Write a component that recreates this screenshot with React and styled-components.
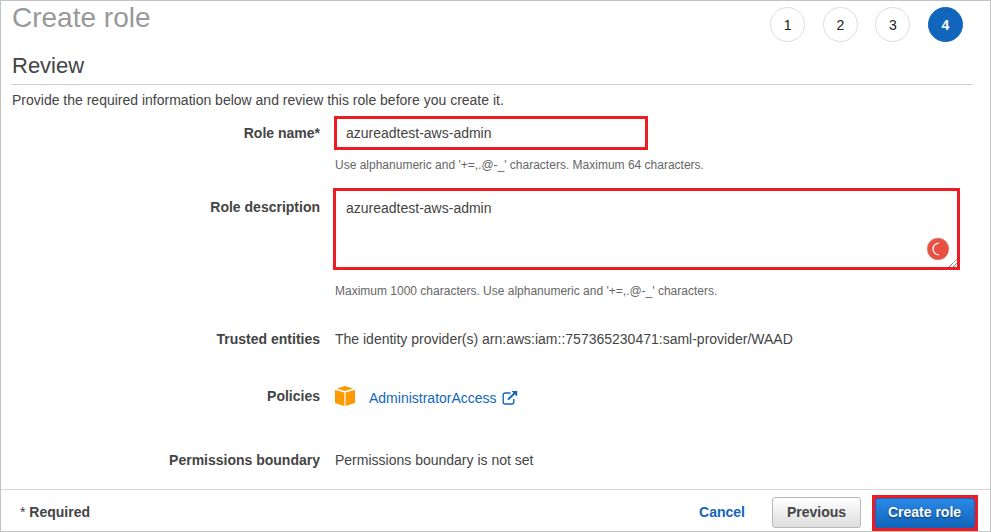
import React from "react";
import styled, { createGlobalStyle, css } from "styled-components";

const GlobalStyle = createGlobalStyle`
  * { box-sizing: border-box; }
  body {
    margin: 0;
    background: #fff;
    color: #444;
    font: 14px/18px "Liberation Sans", Arial, sans-serif;
  }
`;

const Page = styled.div`
  width: 991px;
  height: 532px;
  border: 1px solid #c3c3c3;
  display: flex;
  flex-direction: column;
  overflow: hidden;
`;

const Main = styled.main`
  flex: 1;
  min-height: 0;
  padding: 0 18px 0 11px;
`;

const Header = styled.header`
  display: flex;
  justify-content: space-between;
  height: 48px;
`;

const Title = styled.h1`
  margin: 0;
  font-size: 28px;
  line-height: 34px;
  font-weight: 400;
  color: #999;
`;

const Steps = styled.ol`
  display: flex;
  gap: 17.6px;
  list-style: none;
  margin: 6px 9px 0 0;
  padding: 0;
`;

const Step = styled.li`
  width: 35px;
  height: 35px;
  padding-top: 1px;
  border-radius: 50%;
  border: 1px solid #ddd;
  display: flex;
  align-items: center;
  justify-content: center;
  color: #222;
  ${(p) =>
    p.$active &&
    css`
      background: #1166bb;
      border-color: #1166bb;
      color: #fff;
      font-weight: 700;
    `}
`;

const SectionTitle = styled.h2`
  margin: 0;
  height: 36px;
  border-bottom: 1px solid #ccc;
  font-size: 22px;
  line-height: 34px;
  font-weight: 400;
`;

const Intro = styled.p`
  margin: 6px 0 7px;
`;

const Row = styled.div`
  display: grid;
  grid-template-columns: 308px 1fr;
  column-gap: 15px;
  height: ${(p) => p.$height}px;
`;

const Label = styled.div`
  padding-top: ${(p) => p.$top || 0}px;
  text-align: right;
  font-weight: 700;
`;

const Value = styled.div`
  min-width: 0;
`;

const Field = styled.div`
  display: flex;
  justify-content: space-between;
  width: ${(p) => p.$width}px;
  height: ${(p) => p.$height}px;
  margin-left: ${(p) => p.$shift}px;
  padding: ${(p) => p.$pad};
  border: 3px solid #ed1c24;
`;

const FieldIcons = styled.div`
  align-self: flex-end;
  display: flex;
  align-items: flex-end;
`;

const Spinner = styled.svg`
  width: 24px;
  height: 24px;
  margin-bottom: 6px;
`;

const Grip = styled.svg`
  width: 8px;
  height: 8px;
  margin-left: -1px;
`;

const Hint = styled.div`
  margin-top: ${(p) => p.$top}px;
  font-size: 12px;
  line-height: 16px;
  color: #666;
`;

const Policy = styled.div`
  display: flex;
  align-items: flex-start;
`;

const Cube = styled.svg`
  width: 20px;
  height: 20px;
  margin-top: -1px;
  margin-right: 14px;
`;

const PolicyLink = styled.a`
  display: flex;
  color: #1166bb;
  padding-top: 2px;
`;

const External = styled.svg`
  width: 16px;
  height: 14px;
  margin: 2px 0 0 5px;
`;

const Footer = styled.footer`
  display: flex;
  align-items: center;
  height: 42px;
  border-top: 1px solid #d5d5d5;
  padding: 5px 12px 0 19px;
  font-weight: 700;
`;

const Required = styled.div`
  flex: 1;
  margin-bottom: 2px;
`;

const Star = styled.span`
  font-weight: 400;
`;

const Cancel = styled.a`
  color: #1166bb;
  margin: 0 27px 2px 0;
`;

const Button = styled.button`
  font: inherit;
  border-radius: 3px;
  ${(p) =>
    p.$primary
      ? css`
          width: 100px;
          height: 30px;
          padding: 0 1px 2px 0;
          color: #fff;
          border: 1px solid #1166bb;
          background: linear-gradient(#2b88e6, #1166bb);
          text-shadow: 0 1px 2px #063a70;
        `
      : css`
          width: 89px;
          height: 31px;
          padding: 0 0 1px;
          color: #444;
          border: 1px solid #b8b8b8;
          background: linear-gradient(#fff, #ddd);
          margin: 0 11px 1px 0;
        `}
`;

const Highlight = styled.div`
  display: flex;
  border: 3px solid #ed1c24;
  background: #ed1c24;
`;

export default function App() {
  return (
    <>
      <GlobalStyle />
      <Page>
        <Main>
          <Header>
            <Title>Create role</Title>
            <Steps>
              <Step>1</Step>
              <Step>2</Step>
              <Step>3</Step>
              <Step $active>4</Step>
            </Steps>
          </Header>
          <SectionTitle>Review</SectionTitle>
          <Intro>Provide the required information below and review this role before you create it.</Intro>

          <Row $height={72}>
            <Label $top={8}>Role name*</Label>
            <Value>
              <Field $width={314} $height={34} $shift={-1} $pad="5px 9px">azureadtest-aws-admin</Field>
              <Hint $top={7}>Use alphanumeric and '+=,.@-_' characters. Maximum 64 characters.</Hint>
            </Value>
          </Row>

          <Row $height={142}>
            <Label $top={10}>Role description</Label>
            <Value>
              <Field $width={627} $height={82} $shift={-2} $pad="8px 0 0 10px">
                azureadtest-aws-admin
                <FieldIcons>
                  <Spinner viewBox="0 0 24 24">
                    <circle cx="12" cy="12" r="10.9" fill="#e85043" stroke="#c9a79b" strokeWidth=".5" />
                    <path d="M12.8 6.2A5.8 5.8 0 1 0 12.8 17.8" fill="none" stroke="#fff" strokeWidth="1.3" />
                  </Spinner>
                  <Grip viewBox="0 0 8 8">
                    <path d="M0 8L8 0M4 8L8 4" stroke="#555" strokeWidth="1" strokeDasharray="1.1 .5" />
                  </Grip>
                </FieldIcons>
              </Field>
              <Hint $top={13}>Maximum 1000 characters. Use alphanumeric and '+=,.@-_' characters.</Hint>
            </Value>
          </Row>

          <Row $height={57}>
            <Label>Trusted entities</Label>
            <Value>The identity provider(s) arn:aws:iam::757365230471:saml-provider/WAAD</Value>
          </Row>

          <Row $height={64}>
            <Label>Policies</Label>
            <Policy>
              <Cube viewBox="0 0 20 20" fill="#ff9900">
                <path d="M1.8 2.6L10 0L18.2 2.6L10 5ZM0 4L9.4 6.6V20L0 17ZM20 4L10.6 6.6V20L20 17Z" />
              </Cube>
              <PolicyLink>
                AdministratorAccess
                <External viewBox="0 0 16 14">
                  <path
                    d="M8.5 2H3.2A2 2 0 0 0 1.2 4V11A2 2 0 0 0 3.2 13H9.8A2 2 0 0 0 11.8 11V8"
                    fill="none"
                    stroke="#1166bb"
                    strokeWidth="1.4"
                  />
                  <path d="M6 8.6L12.6 2.2" fill="none" stroke="#1166bb" strokeWidth="2" />
                  <path d="M9.5 0H15.2V5.6Z" fill="#1166bb" />
                </External>
              </PolicyLink>
            </Policy>
          </Row>

          <Row $height={37}>
            <Label>Permissions boundary</Label>
            <Value>Permissions boundary is not set</Value>
          </Row>
        </Main>
        <Footer>
          <Required>
            <Star>*</Star> Required
          </Required>
          <Cancel>Cancel</Cancel>
          <Button>Previous</Button>
          <Highlight>
            <Button $primary>Create role</Button>
          </Highlight>
        </Footer>
      </Page>
    </>
  );
}
